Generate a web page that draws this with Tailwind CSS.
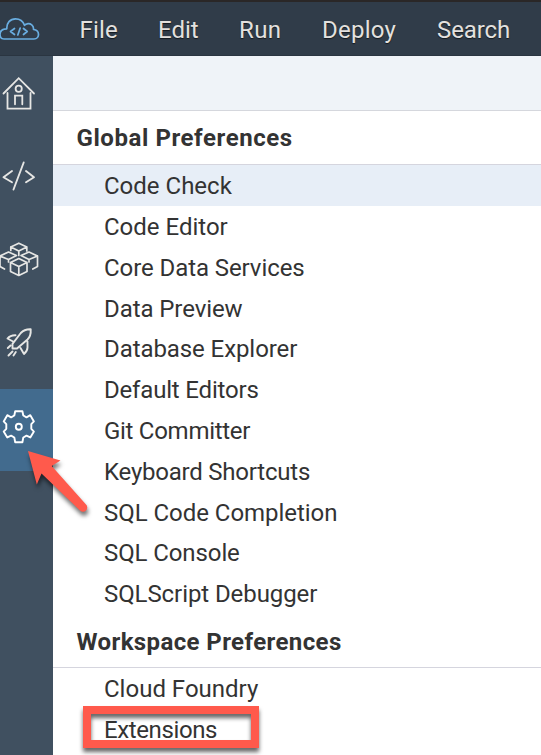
<!DOCTYPE html>
<html lang="en">
<head>
<meta charset="utf-8">
<title>Preferences</title>
<script src="https://cdn.jsdelivr.net/npm/@tailwindcss/browser@4"></script>
</head>
<body class="relative h-[755px] w-[541px] overflow-hidden bg-white font-['Roboto',sans-serif] text-[24px] text-[#333]">
<div class="flex h-[755px] flex-col">
  <header class="flex h-14 shrink-0 items-center border-t-2 border-b border-t-[#2a2727] border-b-[#2a3541] bg-[#303c49] text-[#e3e1df] [text-shadow:0_1px_1px_#14191f]">
    <svg class="h-[24px] w-[40px] shrink-0" viewBox="0 0 40 24" fill="none" stroke="#69ade0" stroke-width="1.7" stroke-linecap="round" stroke-linejoin="round">
      <path d="M4 22H34C37 22 38.5 19.500 38.500 17.500C38.500 14 36 12.700 33.500 12.500C34 8.500 30.500 6 27 6.800C26 7 25 7.500 24.500 8.300M24.500 8.300C23 4 19.500 1.800 15.500 1.800C10 1.800 6.500 6 6.800 11.800C2.500 11.800 0 14 0 17.500C0 20 1.500 22 4 22"/>
      <path d="M14.500 11.500L10.500 14.500L14.500 17.500M23.500 11.500L27.200 14.500L23.500 17.500M20.200 11L17.800 18"/>
    </svg>
    <nav class="flex pt-[2px] whitespace-nowrap leading-[28px]">
      <span class="ml-[39.500px] w-[78.500px] tracking-[0.2px]">File</span>
      <span class="w-[81px]">Edit</span>
      <span class="w-[83px] tracking-[0.4px]">Run</span>
      <span class="w-[115px] tracking-[0.25px]">Deploy</span>
      <span class="tracking-[-0.1px]">Search</span>
    </nav>
  </header>
  <div class="flex min-h-0 flex-1">
    <aside class="flex w-[53px] shrink-0 flex-col bg-[#405060] text-[#e6e6e4]">
      <div class="h-[83px] pt-[20px]">
        <svg class="h-[34px] w-[40px]" viewBox="0 0 40 34" fill="none" stroke="currentColor" stroke-width="1.800" stroke-linecap="round" stroke-linejoin="miter"><path d="M3.500 17.500L18.700 2.200L34 17.500M7.500 17V32.700H30.500V17M15 28.300V19.700H22.300V28.300"/><circle cx="18.700" cy="12.700" r="3.100"/></svg>
      </div>
      <div class="h-[83px] pt-[21px]">
        <svg class="h-[34px] w-[40px]" viewBox="0 0 40 34" fill="none" stroke="currentColor" stroke-width="1.900" stroke-linecap="round" stroke-linejoin="round"><path d="M12 11L3.500 17.200L12 22.300M26 11L34 17.200L26 22.300M23.700 2.500L13.500 29.500"/></svg>
      </div>
      <div class="h-[83px] pt-[20px]">
        <svg class="h-[36px] w-[40px]" viewBox="0 0 40 36" fill="none" stroke="currentColor" stroke-width="1.700" stroke-linecap="round" stroke-linejoin="round"><path d="M10.800 8.500V5L18.800 1.200L26.800 5V9M10.800 5L18.800 9L26.800 5M18.800 9V13.500M0 24.500V14L8.500 10L16.500 13.500L8.500 17.500L0 14M0 24.500L4.500 27M8.500 17.500V20M37.500 14L29 10L21 13.500L29 17.500L37.500 14V24.500L32.800 27M29 17.500V20M10.500 20.500L18.800 16.500L27 20.500V29.500L18.800 33.500L10.500 29.500V20.500L18.800 24.500L27 20.500M18.800 24.500V33.500"/></svg>
      </div>
      <div class="h-[84px] pt-[20px]">
        <svg class="h-[36px] w-[40px]" viewBox="0 0 40 36" fill="none" stroke="currentColor" stroke-width="1.900" stroke-linecap="round" stroke-linejoin="round"><path d="M30.700 4.200C26 4 23.500 5 20.800 8L12.500 18.800V23.500H17L27.500 14.500C30.500 11.500 31 8.500 30.700 4.200ZM15.500 10.200C12 10.100 9.500 11 7.500 13.500L13 16.500M27.500 16.500V22.500C27.500 25.500 26.300 27 24 29L20.500 23M10.500 20.500L7.800 23M8.500 30.500L12.500 26.500M15.800 27L13.500 30.500"/></svg>
      </div>
      <div class="h-[82px] bg-[#426b8e] pt-[20px] text-white">
        <svg class="h-[36px] w-[40px]" viewBox="0 0 40 36" fill="none" stroke="currentColor" stroke-width="1.900" stroke-linejoin="round"><path d="M15.200 2.300H22.400L23.300 6.500L26.500 8.300L30.300 6.200L33.900 12.400L31.300 15.200V19.800L33.900 22.600L30.300 28.400L26.500 26.700L23.300 28.500L22.400 33.300H15.200L14.300 28.500L11.100 26.700L7.300 28.400L3.700 22.600L6.300 19.800V15.200L3.700 12.400L7.300 6.200L11.100 8.300L14.300 6.500Z"/><circle cx="18.800" cy="17.700" r="3"/></svg>
      </div>
    </aside>
    <main class="flex-1 whitespace-nowrap">
      <div class="h-[55px] border-b border-[#d5d7dd] bg-[#eff3f8]"></div>
      <h2 class="flex h-[54px] items-center border-b border-[#d5d5de] pt-px pl-[23.500px] font-bold tracking-[0.57px]">Global Preferences</h2>
      <ul class="leading-[43px]">
        <li class="h-[41px] bg-[#e7eef7] pl-[51px]">Code Check</li>
        <li class="h-[40.800px] pl-[51px]">Code Editor</li>
        <li class="h-[40.800px] pl-[51px] tracking-[-0.08px]">Core Data Services</li>
        <li class="h-[40.800px] pl-[51px] tracking-[-0.08px]">Data Preview</li>
        <li class="h-[40.800px] pl-[51px] tracking-[-0.08px]">Database Explorer</li>
        <li class="h-[40.800px] pl-[51px] tracking-[-0.18px]">Default Editors</li>
        <li class="h-[40.800px] pl-[51px] tracking-[-0.28px]">Git Committer</li>
        <li class="h-[40.800px] pl-[51px] tracking-[-0.220px]">Keyboard Shortcuts</li>
        <li class="h-[40.800px] pl-[51px] tracking-[-0.04px]">SQL Code Completion</li>
        <li class="h-[40.800px] pl-[51px] tracking-[-0.100px]">SQL Console</li>
        <li class="h-[40.800px] pl-[51px] tracking-[-0.08px]">SQLScript Debugger</li>
      </ul>
      <h2 class="flex h-[54px] items-center border-b border-[#d5d5de] pt-[3px] pl-[23.500px] font-bold tracking-[0.39px]">Workspace Preferences</h2>
      <ul class="leading-[43px]">
        <li class="h-[40.800px] pl-[51px]">Cloud Foundry</li>
        <li class="h-[40.800px] pl-[51px] tracking-[-0.380px]">Extensions</li>
      </ul>
    </main>
  </div>
</div>
<svg class="absolute top-[440px] left-[20px] h-[84px] w-[84px] [filter:drop-shadow(1px_4px_2px_rgb(0_0_0/0.55))]" viewBox="20 440 84 84"><path fill="#ff5a4c" d="M28 451L60.500 460.500L51.700 466L86 504.500A4.200 4.200 0 0 1 80 510.500L41.500 473.500L36.800 484.500Z"/></svg>
<div class="absolute top-[706px] left-[83px] h-[42px] w-[176px] border-8 border-[#ff5a4c] [filter:drop-shadow(0_4px_2px_rgb(0_0_0/0.6))]"></div>
</body>
</html>
